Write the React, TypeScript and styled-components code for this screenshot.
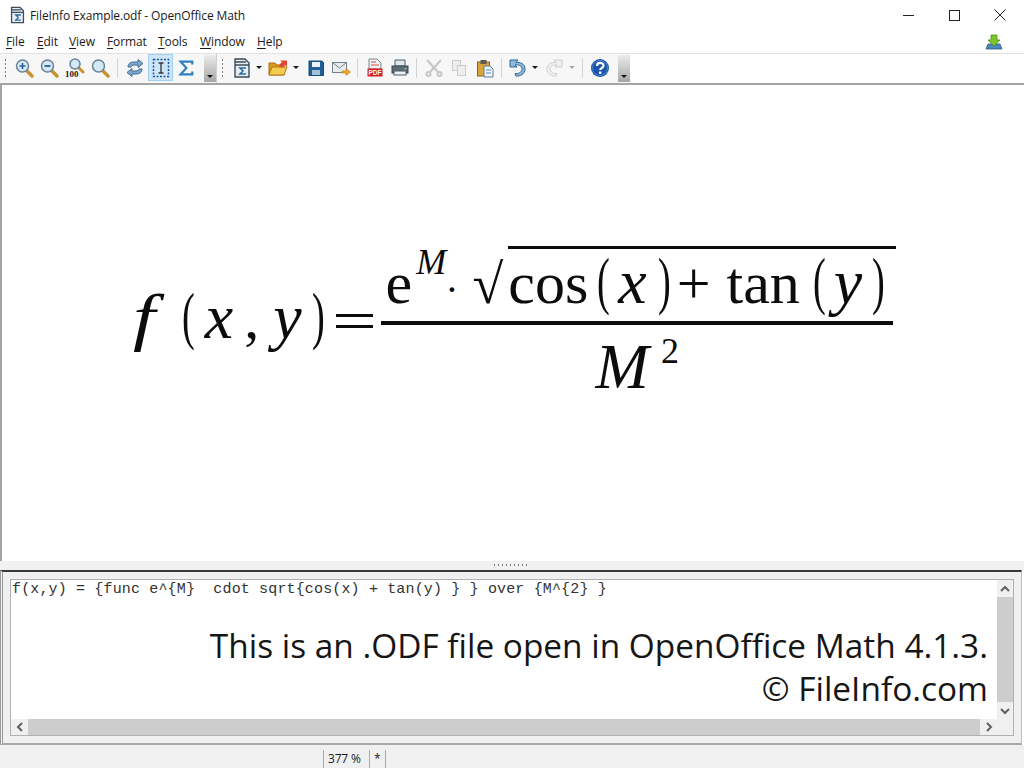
import React from 'react';
import styled, { createGlobalStyle } from 'styled-components';

const GlobalStyle = createGlobalStyle`
  html, body {
    margin: 0;
    padding: 0;
    width: 1024px;
    height: 768px;
    overflow: hidden;
    background: #fff;
    font-family: "Open Sans", "Noto Sans", sans-serif;
    color: #1a1a1a;
  }
`;

const Window = styled.div`
  width: 1024px;
  height: 768px;
  display: flex;
  flex-direction: column;
`;

const TitleBar = styled.div`
  height: 32px;
  flex: none;
  display: flex;
  align-items: center;
  padding-left: 9px;
  padding-bottom: 2px;
  box-sizing: border-box;
  background: #fff;
`;

const TitleText = styled.span`
  margin-left: 4px;
  font-size: 12px;
  letter-spacing: -0.12px;
  flex: 1;
`;

const WindowButton = styled.div`
  width: 46px;
  height: 30px;
  display: flex;
  align-items: center;
  justify-content: center;
  &:last-child {
    margin-right: 1px;
  }
`;

const MenuBar = styled.div`
  height: 22px;
  flex: none;
  display: flex;
  align-items: center;
  box-sizing: border-box;
  border-bottom: 1px solid #e2e2e2;
  padding: 0 21px 2px 6px;
  background: #fff;
`;

const MenuItem = styled.span<{ $width: number }>`
  width: ${p => p.$width}px;
  font-size: 12px;
  letter-spacing: -0.1px;
  u {
    text-underline-offset: 2px;
  }
`;

const MenuSpacer = styled.div`
  flex: 1;
`;

const ToolBar = styled.div`
  height: 31px;
  flex: none;
  display: flex;
  align-items: center;
  box-sizing: border-box;
  background: linear-gradient(to right, #f7f7f7 630px, #fff 631px);
  border-bottom: 2px solid #a4a4a4;
`;

const Grip = styled.div<{ $width?: number }>`
  width: ${p => p.$width ?? 11}px;
  height: 20px;
  flex: none;
  display: flex;
  justify-content: center;
  &::before {
    content: '';
    width: 1px;
    height: 20px;
    margin-right: 1px;
    background: repeating-linear-gradient(to bottom, #7d7d7d 0 2px, transparent 2px 4px);
  }
`;

const ToolButton = styled.div<{ $active?: boolean; $gap?: number }>`
  width: 25px;
  height: 27px;
  flex: none;
  margin-left: ${p => p.$gap ?? 0}px;
  margin-top: -2px;
  display: flex;
  align-items: center;
  justify-content: center;
  box-sizing: border-box;
  background: ${p => (p.$active ? '#cde6f7' : 'transparent')};
  border: 1px solid ${p => (p.$active ? '#9fd0f0' : 'transparent')};
`;

const DropArrow = styled.div<{ $disabled?: boolean; $gap?: number }>`
  width: 10px;
  flex: none;
  margin-left: ${p => p.$gap ?? 0}px;
  margin-top: -2px;
  display: flex;
  justify-content: center;
  &::before {
    content: '';
    border-left: 3px solid transparent;
    border-right: 3px solid transparent;
    border-top: 3px solid ${p => (p.$disabled ? '#a8a8a8' : '#1a1a1a')};
  }
`;

const Divider = styled.div<{ $width?: number }>`
  width: ${p => p.$width ?? 10}px;
  height: 20px;
  flex: none;
  display: flex;
  justify-content: center;
  margin-top: -2px;
  &::before {
    content: '';
    width: 1px;
    background: #d4d4d4;
  }
`;

const Overflow = styled.div<{ $gap: number }>`
  width: 12px;
  height: 27px;
  flex: none;
  margin-left: ${p => p.$gap}px;
  margin-top: -1px;
  display: flex;
  align-items: flex-end;
  justify-content: center;
  padding-bottom: 4px;
  box-sizing: border-box;
  background: linear-gradient(to bottom, #ececec, #a6a6a6);
  &::before {
    content: '';
    border-left: 3px solid transparent;
    border-right: 3px solid transparent;
    border-top: 3px solid #111;
  }
`;

const BarEnd = styled.div`
  width: 1px;
  height: 29px;
  flex: none;
  background: #cfcfcf;
`;

const Canvas = styled.div`
  flex: 1;
  min-height: 0;
  display: flex;
  align-items: center;
  box-sizing: border-box;
  padding-left: 131px;
  border-left: 2px solid #a4a4a4;
  background: #fff;
  font-family: "Liberation Serif", "Times New Roman", serif;
  color: #0c0c0c;
`;

const Formula = styled.div`
  display: flex;
  align-items: center;
  white-space: nowrap;
`;

const MathLine = styled.div<{ $height: number; $pad?: number; $line?: number }>`
  height: ${p => p.$height}px;
  line-height: ${p => p.$line ?? 60}px;
  padding-top: ${p => p.$pad ?? 0}px;
  box-sizing: border-box;
  font-size: 60px;
`;

const Glyph = styled.span<{ $italic?: boolean; $size?: number; $gap?: number; $rise?: number }>`
  font-style: ${p => (p.$italic ? 'italic' : 'normal')};
  font-size: ${p => p.$size ?? 60}px;
  margin-left: ${p => p.$gap ?? 0}px;
  vertical-align: ${p => p.$rise ?? 0}px;
  line-height: 0;
`;

const FunctionF = styled.span`
  display: inline-block;
  font-style: italic;
  font-size: 64px;
  line-height: 0;
  transform: scaleX(1.25);
  transform-origin: left center;
`;

const Paren = styled.span<{ $gap?: number }>`
  display: inline-block;
  width: 12px;
  margin-left: ${p => p.$gap ?? 0}px;
  font-size: 64px;
  line-height: 0;
  vertical-align: 1px;
  transform: scaleX(0.6);
  transform-origin: left center;
  font-weight: 400;
`;

const Equals = styled.span`
  display: inline-block;
  width: 37px;
  height: 14px;
  margin-left: 12px;
  box-sizing: border-box;
  vertical-align: 10px;
  border-top: 3px solid #0c0c0c;
  border-bottom: 3px solid #0c0c0c;
`;

const Fraction = styled.div`
  display: flex;
  flex-direction: column;
  align-items: flex-start;
  margin-left: 8px;
`;

const Rule = styled.div`
  width: 512px;
  height: 4px;
  background: #0c0c0c;
`;

const Radicand = styled.span`
  display: inline-block;
  border-top: 3px solid #0c0c0c;
  margin-left: 5px;
  padding-right: 12px;
  height: 60px;
  line-height: 0;
`;

const Splitter = styled.div`
  height: 9px;
  flex: none;
  display: flex;
  align-items: flex-start;
  justify-content: center;
  padding-top: 3px;
  box-sizing: border-box;
  background: #f1f1f1;
  &::before {
    content: '';
    width: 36px;
    height: 2px;
    margin-left: 0;
    background: repeating-linear-gradient(to right, #7d7d7d 0 1px, transparent 1px 4px);
  }
`;

const EditorPanel = styled.div`
  height: 175px;
  flex: none;
  box-sizing: border-box;
  margin-right: 2px;
  border-top: 2px solid #3a3a3a;
  border-left: 3px double #9a9a9a;
  border-right: 1px solid #c0c0c0;
  border-bottom: 2px solid #a8a8a8;
  padding: 7px 7px 7px 7px;
  background: #f0f0f0;
`;

const EditorFrame = styled.div`
  height: 100%;
  box-sizing: border-box;
  border: 1px solid #b0b0b0;
  background: #fff;
  display: grid;
  grid-template-columns: 1fr 16px;
  grid-template-rows: 1fr 16px;
`;

const EditArea = styled.div`
  min-width: 0;
  padding: 1px 9px 0 1px;
`;

const Source = styled.div`
  font-family: "Liberation Mono", "Courier New", monospace;
  font-size: 15px;
  line-height: 17px;
  letter-spacing: 0.15px;
  white-space: pre;
  color: #333;
`;

const Caption = styled.div`
  margin-top: 26px;
  text-align: right;
  font-size: 33.4px;
  line-height: 43px;
  color: #161616;
`;

const ScrollV = styled.div`
  display: grid;
  grid-template-rows: 17px 1fr 17px;
  background: #f0f0f0;
`;

const ScrollH = styled.div`
  display: grid;
  grid-template-columns: 17px 1fr 17px;
  background: #f0f0f0;
`;

const Thumb = styled.div`
  background: #cdcdcd;
`;

const ScrollButton = styled.div`
  display: flex;
  align-items: center;
  justify-content: center;
`;

const Corner = styled.div`
  background: #f0f0f0;
`;

const StatusBar = styled.div`
  height: 23px;
  flex: none;
  display: flex;
  align-items: stretch;
  box-sizing: border-box;
  padding: 5px 0 0 323px;
  background: #f0f0f0;
`;

const StatusCell = styled.div<{ $width: number }>`
  width: ${p => p.$width}px;
  box-sizing: border-box;
  border-left: 1px solid #a8a8a8;
  padding-left: 4px;
  font-size: 12px;
  line-height: 17px;
  letter-spacing: -0.2px;
`;

const Lens = ({ children }: { children?: React.ReactNode }) => (
  <svg width="20" height="20" viewBox="0 0 20 20">
    <path d="M12 12l6 6" stroke="#c9922a" strokeWidth="3.4" strokeLinecap="round" />
    <circle cx="8.5" cy="8" r="6" fill="#d5e8f6" stroke="#6b8297" strokeWidth="1.5" />
    {children}
  </svg>
);

const ZoomFit = () => (
  <svg width="20" height="22" viewBox="0 0 20 22">
    <path d="M13 10l5 5" stroke="#c9922a" strokeWidth="3" strokeLinecap="round" />
    <circle cx="10" cy="7" r="5" fill="#d5e8f6" stroke="#6b8297" strokeWidth="1.5" />
    <text x="0" y="20" fontFamily="Liberation Serif" fontWeight="700" fontSize="9" fill="#222">100</text>
  </svg>
);

const Refresh = () => (
  <svg width="20" height="20" viewBox="0 0 20 20" fill="none">
    <path d="M3 9c0-4 3-5 6-5h4V1.500l5 4-5 4V7H9c-2 0-3 1-3 2z" fill="#7da7cc" stroke="#3f6d98" />
    <path d="M17 11c0 4-3 5-6 5H7v2.500l-5-4 5-4V13h4c2 0 3-1 3-2z" fill="#7da7cc" stroke="#3f6d98" />
  </svg>
);

const CursorBox = () => (
  <svg width="20" height="20" viewBox="0 0 20 20" fill="none">
    <rect x="2.500" y="1.500" width="15" height="17" stroke="#1c54a8" strokeWidth="1.500" strokeDasharray="2 1.500" />
    <path d="M7.500 5h5M10 5v10M7.500 15h5" stroke="#333" strokeWidth="1.300" />
  </svg>
);

const Sigma = () => (
  <svg width="18" height="18" viewBox="0 0 20 20" fill="none">
    <path d="M17 6V3H4l6.500 7L4 17h13v-3" stroke="#2f7fbd" strokeWidth="2.400" />
  </svg>
);

const FormulaDoc = () => (
  <svg width="20" height="20" viewBox="0 0 20 20">
    <path d="M3 1h10l4 4v14H3z" fill="#e6edf3" stroke="#3b4c5c" strokeWidth="1.400" />
    <path d="M3 4h11M3 7h14" stroke="#3b4c5c" strokeWidth="1.400" />
    <path d="M14 10H8l3 3-3 3h6" fill="none" stroke="#2b6ca3" strokeWidth="1.600" />
  </svg>
);

const OpenFolder = () => (
  <svg width="22" height="20" viewBox="0 0 22 20">
    <path d="M2 5h6l2 2h7v10H2z" fill="#d99a1f" stroke="#a8710f" />
    <path d="M2 17l3-8h15l-3 8z" fill="#f6cb52" stroke="#b07a12" />
    <path d="M12 7l3-3-2-1.500h7v6L18 7l-3 3z" fill="#e0452f" />
  </svg>
);

const SaveDisk = () => (
  <svg width="20" height="20" viewBox="0 0 20 20">
    <path d="M3 3h13l1.500 1.500V17.500H3z" fill="#1f5f95" stroke="#174a75" />
    <rect x="6" y="4" width="8" height="5" fill="#eef3f7" />
    <rect x="6" y="12" width="8" height="5" fill="#a7bfd2" />
  </svg>
);

const MailSend = () => (
  <svg width="20" height="20" viewBox="0 0 20 20">
    <rect x="1.500" y="4.500" width="14" height="10" fill="#e9edf1" stroke="#77818a" />
    <path d="M2 5l6.500 5L15 5" fill="none" stroke="#77818a" />
    <path d="M11 13h4v-2.500l4.500 3.500-4.500 3.500V15h-4z" fill="#eda92d" stroke="#b87a11" strokeWidth="0.600" />
  </svg>
);

const PdfDoc = () => (
  <svg width="20" height="20" viewBox="0 0 20 20">
    <path d="M4 1h8l4 4v6H4z" fill="#eef1f4" stroke="#7d8790" />
    <path d="M6 4h5M6 7h8" stroke="#d9503f" />
    <rect x="2.500" y="10.500" width="15" height="8" fill="#d6201a" />
    <text x="3.500" y="17" fontFamily="Liberation Sans" fontWeight="700" fontSize="6.500" fill="#fff">PDF</text>
  </svg>
);

const Printer = () => (
  <svg width="20" height="20" viewBox="0 0 20 20">
    <path d="M5 2h10v6H5z" fill="#dfe6ec" stroke="#4c5a66" />
    <rect x="2" y="8" width="16" height="7" fill="#5d6b77" stroke="#3c4852" />
    <rect x="4" y="13" width="12" height="4" fill="#eef1f4" stroke="#4c5a66" />
    <rect x="14.500" y="10" width="2" height="1.500" fill="#7ed04b" />
  </svg>
);

const Scissors = () => (
  <svg width="20" height="20" viewBox="0 0 20 20" fill="none" stroke="#c6c6c6" strokeWidth="2">
    <path d="M3 2l11 12M17 2L6 14" />
    <circle cx="4.500" cy="16" r="2" />
    <circle cx="15.500" cy="16" r="2" />
  </svg>
);

const CopyDoc = () => (
  <svg width="20" height="20" viewBox="0 0 20 20" fill="#eee" stroke="#cbcbcb">
    <rect x="3.500" y="2.500" width="8" height="10" />
    <rect x="8.500" y="7.500" width="8" height="10" />
  </svg>
);

const Paste = () => (
  <svg width="20" height="20" viewBox="0 0 20 20">
    <rect x="2.500" y="4" width="12" height="14" fill="#d9a43a" stroke="#8a6416" />
    <rect x="5.500" y="2" width="6" height="4" fill="#5a5a5a" />
    <path d="M9 8h6l3 3v8H9z" fill="#f0f5fa" stroke="#5a7d9c" />
    <path d="M11 12h5M11 15h5" stroke="#5a88b0" />
  </svg>
);

const Turn = ({ flip, color, edge }: { flip?: boolean; color: string; edge: string }) => (
  <svg width="20" height="20" viewBox="0 0 20 20" style={flip ? { transform: 'scaleX(-1)' } : undefined}>
    <path
      d="M2 2h8l-2 2.500c4-.5 9 1 9 6.500 0 5-5 7.500-9 7l-1-2.500c3 .5 7-1 7-4.500s-4-4.500-7-4L9 9 2 9z"
      fill={color}
      stroke={edge}
      strokeWidth="1"
    />
  </svg>
);

const Help = () => (
  <svg width="20" height="20" viewBox="0 0 20 20">
    <circle cx="10" cy="10" r="9" fill="#1a55ab" />
    <circle cx="10" cy="10" r="7.500" fill="none" stroke="#4e83cf" />
    <path d="M7 8c0-4 6.500-4 6.500-.3 0 2.300-3.300 2.300-3.300 4.300" fill="none" stroke="#fff" strokeWidth="2.200" />
    <rect x="9" y="13.500" width="2.400" height="2.400" fill="#fff" />
  </svg>
);

const Extension = () => (
  <svg width="18" height="16" viewBox="0 0 18 16">
    <path d="M1 15l2-5h12l2 5z" fill="#4d86b8" stroke="#2c5c86" strokeWidth="0.800" />
    <path d="M6 1h6v5h3l-6 6-6-6h3z" fill="#7cc42c" stroke="#4e8f16" strokeWidth="0.800" />
  </svg>
);

const ArrowIcon = ({ points }: { points: string }) => (
  <svg width="10" height="10" viewBox="0 0 10 10" fill="none" stroke="#606060" strokeWidth="2">
    <path d={points} />
  </svg>
);

const menus: [string, string, number][] = [
  ['F', 'ile', 31],
  ['E', 'dit', 32],
  ['V', 'iew', 38],
  ['F', 'ormat', 51],
  ['T', 'ools', 42],
  ['W', 'indow', 57],
  ['H', 'elp', 40],
];

export default function App() {
  return (
    <Window>
      <GlobalStyle />
      <TitleBar>
        <svg width="17" height="18" viewBox="0 0 20 20">
          <path d="M3 1h10l4 4v14H3z" fill="#e6edf3" stroke="#3b4c5c" strokeWidth="1.500" />
          <path d="M3 4h11M3 7h14" stroke="#3b4c5c" strokeWidth="1.500" />
          <path d="M14 10H8l3 3-3 3h6" fill="none" stroke="#2b6ca3" strokeWidth="1.600" />
        </svg>
        <TitleText>FileInfo Example.odf - OpenOffice Math</TitleText>
        <WindowButton>
          <svg width="11" height="11" viewBox="0 0 11 11"><path d="M0 5.500h11" stroke="#222" /></svg>
        </WindowButton>
        <WindowButton>
          <svg width="11" height="11" viewBox="0 0 11 11"><rect x=".5" y=".5" width="10" height="10" fill="none" stroke="#222" /></svg>
        </WindowButton>
        <WindowButton>
          <svg width="12" height="12" viewBox="0 0 12 12"><path d="M.5.5l11 11M11.500.5l-11 11" stroke="#222" /></svg>
        </WindowButton>
      </TitleBar>

      <MenuBar>
        {menus.map(([key, rest, width]) => (
          <MenuItem key={key + rest} $width={width}>
            <u>{key}</u>{rest}
          </MenuItem>
        ))}
        <MenuSpacer />
        <Extension />
      </MenuBar>

      <ToolBar>
        <Grip />
        <ToolButton><Lens><path d="M5.500 8h6M8.500 5v6" stroke="#2a5f96" strokeWidth="1.600" /></Lens></ToolButton>
        <ToolButton><Lens><path d="M5.500 8h6" stroke="#2a5f96" strokeWidth="1.800" /></Lens></ToolButton>
        <ToolButton $gap={1}><ZoomFit /></ToolButton>
        <ToolButton><Lens /></ToolButton>
        <Divider />
        <ToolButton><Refresh /></ToolButton>
        <ToolButton $gap={1} $active><CursorBox /></ToolButton>
        <ToolButton><Sigma /></ToolButton>
        <Overflow $gap={6} />
        <BarEnd />
        <Grip $width={12} />
        <ToolButton><FormulaDoc /></ToolButton>
        <DropArrow />
        <ToolButton $gap={1}><OpenFolder /></ToolButton>
        <DropArrow $gap={1} />
        <ToolButton $gap={2}><SaveDisk /></ToolButton>
        <ToolButton><MailSend /></ToolButton>
        <Divider $width={9} />
        <ToolButton><PdfDoc /></ToolButton>
        <ToolButton><Printer /></ToolButton>
        <Divider $width={9} />
        <ToolButton><Scissors /></ToolButton>
        <ToolButton><CopyDoc /></ToolButton>
        <ToolButton $gap={1}><Paste /></ToolButton>
        <Divider $width={8} />
        <ToolButton><Turn color="#8fb8dc" edge="#2f6699" /></ToolButton>
        <DropArrow />
        <ToolButton $gap={1}><Turn flip color="#f0f0f0" edge="#cfcfcf" /></ToolButton>
        <DropArrow $gap={1} $disabled />
        <Divider />
        <ToolButton><Help /></ToolButton>
        <Overflow $gap={6} />
      </ToolBar>

      <Canvas>
        <Formula>
          <MathLine $height={80} $pad={5}>
            <FunctionF>f</FunctionF>
            <Paren $gap={31}>(</Paren>
            <Glyph $italic $size={64} $gap={11}>x</Glyph>
            <Glyph $gap={11}>,</Glyph>
            <Glyph $italic $size={64} $gap={14}>y</Glyph>
            <Paren $gap={10}>)</Paren>
            <Equals />
          </MathLine>
          <Fraction>
            <MathLine $height={78} $pad={3}>
              <Glyph $gap={5}>e</Glyph>
              <Glyph $italic $size={36} $rise={29} $gap={4}>M</Glyph>
              <Glyph $size={40} $gap={-1}>·</Glyph>
              <Glyph $size={56} $gap={14}>√</Glyph>
              <Radicand>
                <MathLine $height={57} $line={68}>
                  <Glyph>cos</Glyph>
                  <Paren $gap={9}>(</Paren>
                  <Glyph $italic $size={64} $gap={9}>x</Glyph>
                  <Paren $gap={11}>)</Paren>
                  <Glyph $gap={7}>+</Glyph>
                  <Glyph $gap={16}>tan</Glyph>
                  <Paren $gap={13}>(</Paren>
                  <Glyph $italic $size={64} $gap={9}>y</Glyph>
                  <Paren $gap={10}>)</Paren>
                </MathLine>
              </Radicand>
            </MathLine>
            <Rule />
            <MathLine $height={78} $line={86}>
              <Glyph $italic $size={64} $gap={215}>M</Glyph>
              <Glyph $size={36} $gap={12} $rise={25}>2</Glyph>
            </MathLine>
          </Fraction>
        </Formula>
      </Canvas>

      <Splitter />

      <EditorPanel>
        <EditorFrame>
          <EditArea>
            <Source>{'f(x,y) = {func e^{M}  cdot sqrt{cos(x) + tan(y) } } over {M^{2} }'}</Source>
            <Caption>
              This is an .ODF file open in OpenOffice Math 4.1.3.
              <br />
              © FileInfo.com
            </Caption>
          </EditArea>
          <ScrollV>
            <ScrollButton><ArrowIcon points="M1 7l4-4 4 4" /></ScrollButton>
            <Thumb />
            <ScrollButton><ArrowIcon points="M1 3l4 4 4-4" /></ScrollButton>
          </ScrollV>
          <ScrollH>
            <ScrollButton><ArrowIcon points="M7 1L3 5l4 4" /></ScrollButton>
            <Thumb />
            <ScrollButton><ArrowIcon points="M3 1l4 4-4 4" /></ScrollButton>
          </ScrollH>
          <Corner />
        </EditorFrame>
      </EditorPanel>

      <StatusBar>
        <StatusCell $width={46}>377 %</StatusCell>
        <StatusCell $width={16}>*</StatusCell>
        <StatusCell $width={1} />
      </StatusBar>
    </Window>
  );
}
